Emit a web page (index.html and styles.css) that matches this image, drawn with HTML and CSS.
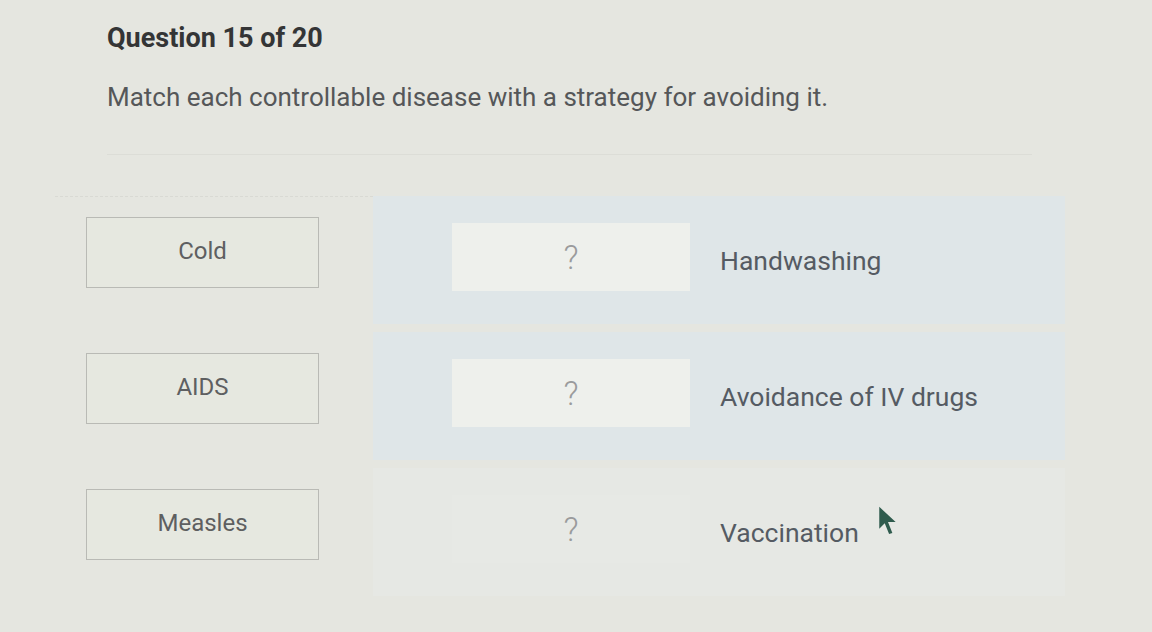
FILE: index.html
```html
<!doctype html>
<html>
<head>
<meta charset="utf-8">
<title>Question 15 of 20</title>
<link rel="stylesheet" href="styles.css">
</head>

<body>

<div class="quiz">
    <h1 class="q-num">Question 15 of 20</h1>
    <p class="q-text">Match each controllable disease with a strategy for avoiding it.</p>
    <div class="rule"></div>

    <div class="match">
        <div class="terms">
            <div class="term-cell"><div class="term">Cold</div></div>
            <div class="term-cell"><div class="term">AIDS</div></div>
            <div class="term-cell"><div class="term">Measles</div></div>
        </div>
        <div class="answers">
            <div class="pair">
                <div class="slot">?</div>
                <span class="label">Handwashing</span>
            </div>
            <div class="pair">
                <div class="slot">?</div>
                <span class="label">Avoidance of IV drugs</span>
            </div>
            <div class="pair last">
                <div class="slot">?</div>
                <span class="label">Vaccination</span>
            </div>
        </div>
    </div>
</div>

<!-- mouse pointer -->
<svg class="pointer" width="24" height="34" viewBox="0 0 22 30">
    <path d="M3 2 L3 22 L8 17 L12 27 L15 26 L11 16 L18 16 Z" fill="#2f5b4d"/>
</svg>

</body>
</html>
```

FILE: styles.css
```css
*{ padding: 0; margin: 0; }
body{ background: #e5e6e0; font-family: Roboto, "Liberation Sans", Arial, sans-serif; width: 1152px; height: 632px; overflow: hidden; position: relative; }

.quiz { padding: 23px 0 0 0; }

.q-num { margin-left: 107px; font-size: 27px; font-weight: bold; color: #343536; line-height: 30px; }
.q-text { margin: 29px 0 0 107px; font-size: 26px; color: #555759; line-height: 30px; }
.rule { margin: 42px 120px 0 107px; height: 1px; background: #dcddd7; }

.match { display: flex; margin: 41px 0 0 55px; }

.terms { width: 318px; display: flex; flex-direction: column; gap: 8px; border-top: 1px dashed #d9dad4; }
.term-cell { height: 128px; padding: 20px 0 0 31px; box-sizing: border-box; }
.term { width: 233px; height: 71px; border: 1px solid #b9bab5; background: #e6e8e0; color: #5e5f61; font-size: 24px; display: flex; justify-content: center; align-items: center; padding-bottom: 4px; box-sizing: border-box; }

.answers { width: 692px; display: flex; flex-direction: column; gap: 8px; }
.pair { height: 128px; background: #dfe6e8; display: flex; align-items: center; padding-left: 79px; box-sizing: border-box; }
.pair.last { background: #e6e8e4; }
.slot { width: 238px; height: 68px; background: #eef0ec; color: #9a9b9c; font-size: 33px; font-weight: 300; display: flex; justify-content: center; align-items: center; margin-top: -6px; }
.pair.last .slot { background: #e7e9e5; }
.label { margin-left: 30px; font-size: 26.5px; color: #555b63; }

.pointer { position: absolute; left: 876px; top: 504px; }
```
